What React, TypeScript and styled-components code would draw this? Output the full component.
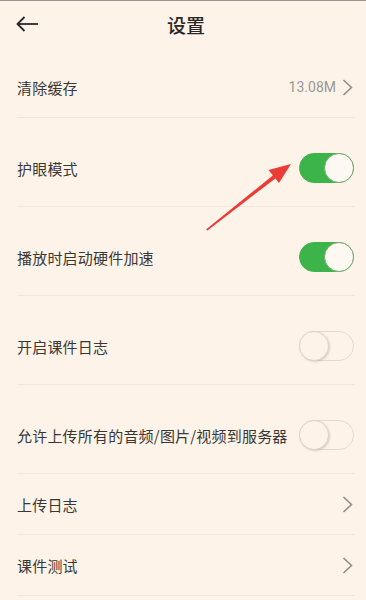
import styled, { createGlobalStyle } from "styled-components";

const GlobalStyle = createGlobalStyle`
  html, body {
    margin: 0;
    padding: 0;
    background: #fdf3e9;
  }
  * { box-sizing: border-box; }
`;

const Page = styled.div`
  position: relative;
  width: 366px;
  height: 600px;
  overflow: hidden;
  background: #fdf3e9;
  border-top: 1px solid #9a9692;
  font-family: "Noto Sans CJK SC", "Noto Sans", sans-serif;
  color: #363432;
`;

const Header = styled.div`
  display: grid;
  grid-template-columns: 60px 1fr 60px;
  align-items: center;
  height: 46px;
  padding-left: 16px;
`;

const BackButton = styled.div`
  display: flex;
  align-items: center;
`;

const Title = styled.h1`
  margin: 0;
  text-align: center;
  font-size: 19px;
  font-weight: 500;
  color: #2a2826;
  transform: translateX(-5px);
`;

const List = styled.div`
  margin-top: 10px;
  display: flex;
  flex-direction: column;
`;

const Item = styled.div<{ $tall?: boolean }>`
  margin: 0 11px 0 17px;
  padding: ${(p) => (p.$tall ? "20px 2px 8px 0" : "0 2px 0 0")};
  border-bottom: 1px solid #f1e6db;
`;

const ItemBody = styled.div`
  height: 60px;
  display: flex;
  align-items: center;
  justify-content: space-between;
`;

const Label = styled.span`
  font-size: 15px;
  letter-spacing: 0.2px;
  color: #3a3835;
`;

const Trailing = styled.div`
  display: flex;
  align-items: center;
  gap: 6px;
`;

const Value = styled.span`
  font-size: 14px;
  color: #9b9895;
  font-family: "Roboto", "Noto Sans", sans-serif;
`;

const Track = styled.div<{ $on: boolean }>`
  position: relative;
  width: 55px;
  height: 30px;
  border-radius: 15px;
  margin-right: -1px;
  background: ${(p) => (p.$on ? "#3db44a" : "transparent")};
  border: 1px solid ${(p) => (p.$on ? "#3db44a" : "#e2dad2")};
`;

const Knob = styled.div<{ $on: boolean }>`
  position: absolute;
  top: -1px;
  left: ${(p) => (p.$on ? "24px" : "-1px")};
  width: 30px;
  height: 30px;
  border-radius: 50%;
  background: ${(p) => (p.$on ? "#fdf8f1" : "#fdf3e9")};
  border: 1px solid ${(p) => (p.$on ? "#7aa873" : "#ddd4cb")};
  box-shadow: ${(p) => (p.$on ? "none" : "1px 1px 2px rgba(120,100,80,0.25)")};
`;

const Pointer = styled.svg`
  position: absolute;
  left: 0;
  top: 0;
  pointer-events: none;
`;

const Chevron = () => (
  <svg width="11" height="17" viewBox="0 0 11 17">
    <polyline points="1.5,1 9.5,8.5 1.5,16" fill="none" stroke="#8c8986" strokeWidth="1.5" />
  </svg>
);

const Toggle = ({ on }: { on: boolean }) => (
  <Track $on={on}>
    <Knob $on={on} />
  </Track>
);

type Row =
  | { label: string; kind: "link"; value?: string }
  | { label: string; kind: "toggle"; on: boolean };

const rows: Row[] = [
  { label: "清除缓存", kind: "link", value: "13.08M" },
  { label: "护眼模式", kind: "toggle", on: true },
  { label: "播放时启动硬件加速", kind: "toggle", on: true },
  { label: "开启课件日志", kind: "toggle", on: false },
  { label: "允许上传所有的音频/图片/视频到服务器", kind: "toggle", on: false },
  { label: "上传日志", kind: "link" },
  { label: "课件测试", kind: "link" },
];

const App = () => (
  <>
    <GlobalStyle />
    <Page>
      <Header>
        <BackButton>
          <svg width="23" height="16" viewBox="0 0 23 16">
            <line x1="1.5" y1="8" x2="22" y2="8" stroke="#2a2826" strokeWidth="1.8" />
            <polyline points="8.5,1 1.5,8 8.5,15" fill="none" stroke="#2a2826" strokeWidth="1.8" />
          </svg>
        </BackButton>
        <Title>设置</Title>
        <span />
      </Header>
      <List>
        {rows.map((row) => (
          <Item key={row.label} $tall={row.kind === "toggle"}>
            <ItemBody>
              <Label>{row.label}</Label>
              {row.kind === "toggle" ? (
                <Toggle on={row.on} />
              ) : (
                <Trailing>
                  {row.value && <Value>{row.value}</Value>}
                  <Chevron />
                </Trailing>
              )}
            </ItemBody>
          </Item>
        ))}
      </List>
      <Pointer width="366" height="600" viewBox="0 0 366 600">
        <polygon points="206,228.5 274,173.5 276,177 207.5,229.5" fill="#ea3b37" />
        <polygon points="291,163 268.5,169 279,182" fill="#ea3b37" />
      </Pointer>
    </Page>
  </>
);

export default App;
